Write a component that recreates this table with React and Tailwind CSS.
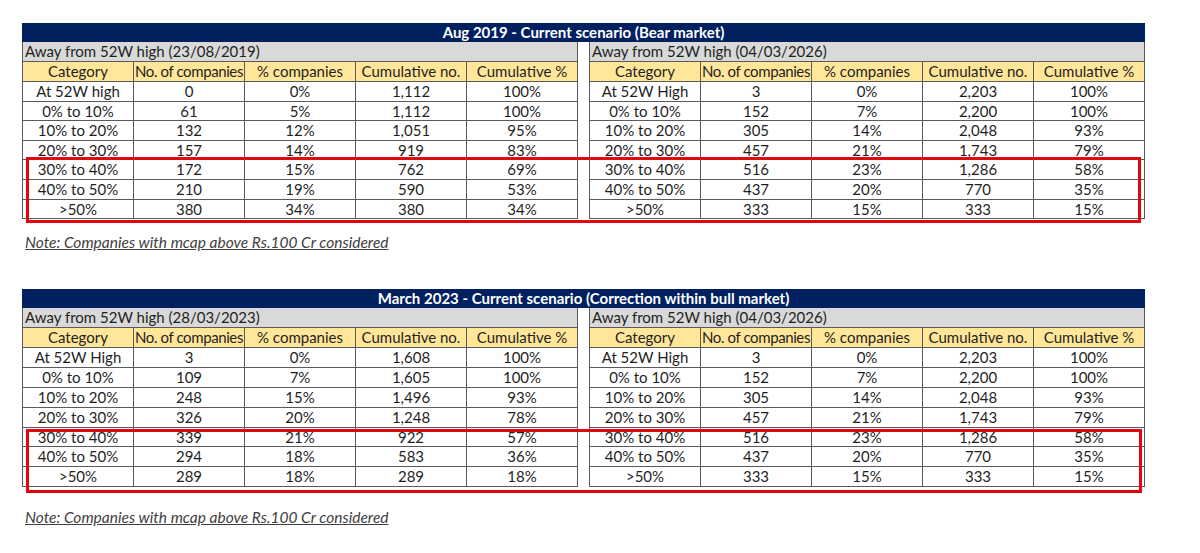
import React from "react";

const HEAD = ["Category", "No. of companies", "% companies", "Cumulative no.", "Cumulative %"];

const RIGHT_2026 = {
  label: "Away from 52W high (04/03/2026)",
  rows: [
    ["At 52W High", "3", "0%", "2,203", "100%"],
    ["0% to 10%", "152", "7%", "2,200", "100%"],
    ["10% to 20%", "305", "14%", "2,048", "93%"],
    ["20% to 30%", "457", "21%", "1,743", "79%"],
    ["30% to 40%", "516", "23%", "1,286", "58%"],
    ["40% to 50%", "437", "20%", "770", "35%"],
    [">50%", "333", "15%", "333", "15%"],
  ],
};

const BLOCKS = [
  {
    title: "Aug 2019 - Current scenario (Bear market)",
    rowH: "h-[19.6px]",
    box: "top-[134px] h-[66px] w-[1115px]",
    noteGap: "mt-[14px]",
    left: {
      label: "Away from 52W high (23/08/2019)",
      rows: [
        ["At 52W high", "0", "0%", "1,112", "100%"],
        ["0% to 10%", "61", "5%", "1,112", "100%"],
        ["10% to 20%", "132", "12%", "1,051", "95%"],
        ["20% to 30%", "157", "14%", "919", "83%"],
        ["30% to 40%", "172", "15%", "762", "69%"],
        ["40% to 50%", "210", "19%", "590", "53%"],
        [">50%", "380", "34%", "380", "34%"],
      ],
    },
    right: RIGHT_2026,
  },
  {
    title: "March 2023 - Current scenario (Correction within bull market)",
    rowH: "h-[19.85px]",
    box: "top-[140px] h-[64px] w-[1116px]",
    noteGap: "mt-[21px]",
    left: {
      label: "Away from 52W high (28/03/2023)",
      rows: [
        ["At 52W High", "3", "0%", "1,608", "100%"],
        ["0% to 10%", "109", "7%", "1,605", "100%"],
        ["10% to 20%", "248", "15%", "1,496", "93%"],
        ["20% to 30%", "326", "20%", "1,248", "78%"],
        ["30% to 40%", "339", "21%", "922", "57%"],
        ["40% to 50%", "294", "18%", "583", "36%"],
        [">50%", "289", "18%", "289", "18%"],
      ],
    },
    right: RIGHT_2026,
  },
];

function SubTable({ label, rows, rowH }) {
  return (
    <div className="w-[556px] border-l border-[#5a5a5a]">
      <div className="h-[20px] bg-[#d9d9d9] border-r border-b border-[#5a5a5a] pl-[2px] leading-[19px] whitespace-nowrap">
        {label}
      </div>
      <div className="grid grid-cols-[repeat(5,111px)] h-[20px] bg-[#ffe699]">
        {HEAD.map((h, i) => (
          <div
            key={h}
            className={`border-r border-b border-[#5a5a5a] text-center leading-[19px] whitespace-nowrap ${
              i === 1 ? "tracking-[-0.4px]" : ""
            }`}
          >
            {h}
          </div>
        ))}
      </div>
      {rows.map((r, i) => (
        <div key={i} className={`grid grid-cols-[repeat(5,111px)] ${rowH}`}>
          {r.map((c, j) => (
            <div
              key={j}
              className="border-r border-b border-[#5a5a5a] text-center leading-[18px]"
            >
              {c}
            </div>
          ))}
        </div>
      ))}
    </div>
  );
}

function Block({ title, left, right, rowH, box, noteGap }) {
  return (
    <div>
      <div className="relative w-[1123px]">
        <div className="h-[19px] bg-[#002060] text-white font-bold text-center leading-[19px]">
          {title}
        </div>
        <div className="flex gap-[11px]">
          <SubTable {...left} rowH={rowH} />
          <SubTable {...right} rowH={rowH} />
        </div>
        {/* red highlight over the lower rows */}
        <div className={`absolute left-[4px] border-[3px] border-[#e2070f] ${box}`} />
      </div>
      <div className={`${noteGap} pl-[3px] italic underline text-[#404040] text-[15.5px] leading-[18px]`}>
        Note: Companies with mcap above Rs.100 Cr considered
      </div>
    </div>
  );
}

export default function App() {
  return (
    <div
      className="w-[1200px] h-[553px] bg-white pt-[23px] pl-[22px] text-[15px] text-[#1f1f1f]"
      style={{ fontFamily: "Lato, 'Open Sans', sans-serif" }}
    >
      <Block {...BLOCKS[0]} />
      <div className="mt-[38px]">
        <Block {...BLOCKS[1]} />
      </div>
    </div>
  );
}
